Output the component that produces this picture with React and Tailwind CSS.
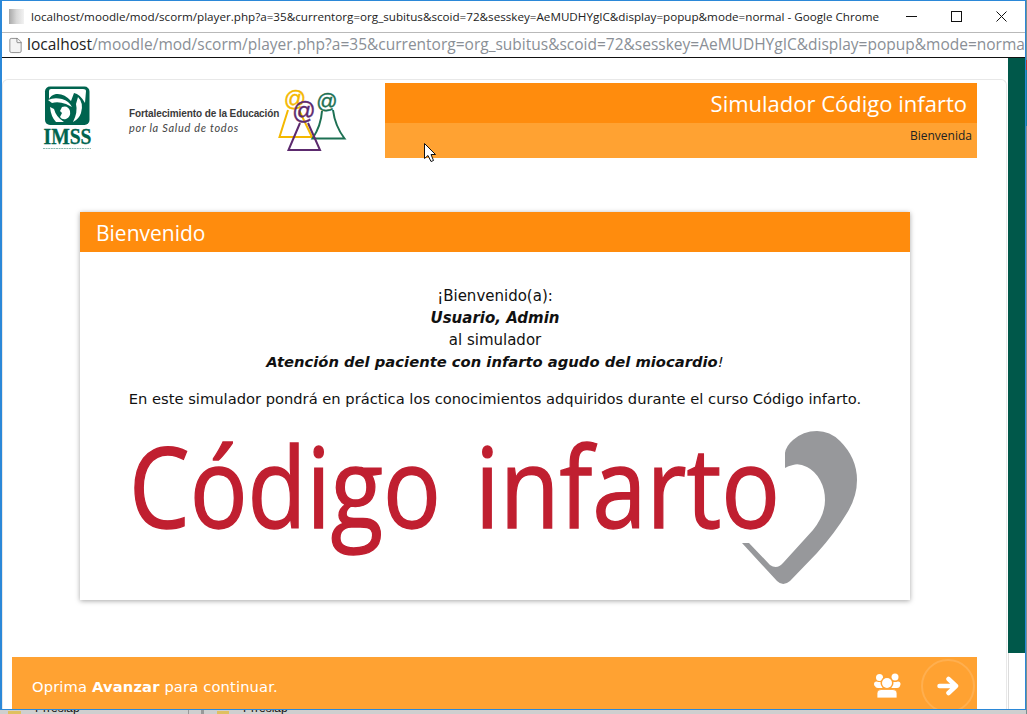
import { File } from 'lucide-react';

const URL_PATH = '/moodle/mod/scorm/player.php?a=35&currentorg=org_subitus&scoid=72&sesskey=AeMUDHYgIC&display=popup&mode=normal';

function WindowButtons() {
  return (
    <div className="ml-auto flex pr-px">
      <div className="flex h-[31px] w-[45px] items-center justify-center">
        <svg width="11" height="11" viewBox="0 0 11 11"><path d="M0 5.5H11" stroke="#111" /></svg>
      </div>
      <div className="flex h-[31px] w-[45px] items-center justify-center">
        <svg width="11" height="11" viewBox="0 0 11 11"><rect x="0.5" y="0.5" width="10" height="10" fill="none" stroke="#111" /></svg>
      </div>
      <div className="flex h-[31px] w-[45px] items-center justify-center">
        <svg width="11" height="11" viewBox="0 0 11 11"><path d="M0.5 0.5L10.5 10.5M10.5 0.5L0.5 10.5" stroke="#111" /></svg>
      </div>
    </div>
  );
}

// viewBox uses page coordinates, easier to compare against the screenshot
function ImssLogo() {
  return (
    <svg width="55" height="70" viewBox="40 86 55 70" className="shrink-0">
      <rect x="45" y="89.5" width="44.5" height="38.5" rx="5" fill="#00644f" />
      <path d="M49 94Q49 92 51 92H83Q86 92 86 94L85 106Q80 97 74 96L71 104Q64 96 56 97Q51 98 49 102Z" fill="#fff" />
      <path d="M48 103Q54 100 62 102Q69 104 72 110L66 107Q58 104 52 106Z" fill="#fff" />
      <path d="M78 100Q84 106 81 116Q79 122 73 125Q78 115 76 107Z" fill="#fff" />
      <path d="M62 110Q68 108 70 114Q71 120 66 122Q62 123 60 120L62 116L60 114Z" fill="#fff" />
      <path d="M54 112Q56 120 64 125H56Q51 120 50 110Z" fill="#fff" />
      <text x="43.5" y="147" fontFamily="'Liberation Serif', serif" fontWeight="700" fontSize="23" fill="#00644f" stroke="#00644f" strokeWidth="0.3" textLength="48" lengthAdjust="spacingAndGlyphs">IMSS</text>
      <path d="M43 151.5H91" stroke="#00644f" strokeWidth="1" strokeDasharray="2 0.6" opacity="0.45" />
    </svg>
  );
}

function AtPeople() {
  return (
    <svg width="72" height="75" viewBox="276 83 72 75" className="shrink-0">
      <g fill="none" strokeWidth="2">
        <path d="M288 110L279.500 137H312L299 110" stroke="#f4b800" />
        <path d="M322 111Q321 126 312.500 138.500H344.500Q335 126 333 110" stroke="#1d7053" />
        <path d="M300 123L288.500 150H320L308 123" stroke="#5c2a6e" />
      </g>
      <g fontFamily="'Liberation Sans', sans-serif" textAnchor="middle" strokeWidth="0.4">
        <text x="295" y="105.500" fontSize="22" fill="#f4b800" stroke="#f4b800">@</text>
        <text x="327" y="107.500" fontSize="21" fill="#1d7053" stroke="#1d7053">@</text>
        <text x="304" y="119" fontSize="23" fill="#5c2a6e" stroke="#5c2a6e">@</text>
      </g>
    </svg>
  );
}

function CodigoInfartoLogo() {
  return (
    <svg width="740" height="165" viewBox="125 425 740 165" className="shrink-0">
      <g fontFamily="'Open Sans', sans-serif" fontSize="111" fill="#c01f30" stroke="#c01f30" strokeWidth="1.4">
        <text x="129" y="528" textLength="312" lengthAdjust="spacingAndGlyphs">Código</text>
        <text x="475" y="528" textLength="305" lengthAdjust="spacingAndGlyphs">infarto</text>
      </g>
      <path
        d="M785 468L785 453Q786 446 793 440Q803 431 817 431Q830 431 840 441Q857 458 857 480Q857 497 847 513Q835 533 817 553L790 581Q783 587 777 581L742 543H749L770 565Q777 570 783 563L813 530Q825 515 825 500Q825 489 820 480Q815 471 807 467Q799 463 793 465Q788 466 785 468Z"
        fill="#97989b"
      />
    </svg>
  );
}

function UsersIcon() {
  return (
    <svg width="27" height="26" viewBox="875 673 27 26" className="ml-auto mt-[16px] shrink-0" fill="#fff">
      <circle cx="880.500" cy="677.500" r="3.500" />
      <circle cx="896" cy="677" r="3.500" />
      <circle cx="877.500" cy="684" r="2.500" />
      <circle cx="899" cy="684" r="2.500" />
      <rect x="876" y="682" width="25" height="6" rx="3" />
      <circle cx="888" cy="683" r="6.500" fill="#ffa232" />
      <circle cx="888" cy="683" r="5" />
      <path d="M878 698V693Q878 689.500 882 689.500H894Q898 689.500 898 693V698Z" stroke="#ffa232" strokeWidth="0.8" />
    </svg>
  );
}

function Cursor() {
  return (
    <svg width="14" height="21" viewBox="0 0 14 21" className="absolute left-[423px] top-[142px]">
      <path d="M1.500 1.500V16.500L5 13.500L8 19.500L10.500 18.500L8 12.500H12.500Z" fill="#fff" stroke="#111" strokeWidth="1" />
    </svg>
  );
}

export default function App() {
  return (
    <div className="relative flex h-[714px] w-[1027px] overflow-hidden bg-[#cfcfcf] font-['Open_Sans',sans-serif]">
      <div className="flex w-[1026px] flex-col">
        <div className="flex h-[710px] flex-col border-x border-t border-b border-x-[#2b88d8] border-y-[#2b88d8] border-l-2">
          {/* title bar */}
          <div className="flex h-[31px] shrink-0 items-center bg-white">
            <div className="ml-[7px] h-[15px] w-[15px] bg-gradient-to-r from-[#a8a8a8] via-[#d8d8d8] to-[#f2f2f2]" />
            <span className="ml-[7px] whitespace-nowrap text-[11.67px] text-[#222]">
              localhost{URL_PATH} - Google Chrome
            </span>
            <WindowButtons />
          </div>

          {/* address bar */}
          <div className="flex h-[26px] shrink-0 items-center overflow-hidden border-t border-b border-t-[#b9b9b9] border-b-[#111] bg-white">
            <File size={17} strokeWidth={1} className="ml-[5px] shrink-0 fill-[#f3f3f3] text-[#666]" />
            <span className="ml-[3px] whitespace-nowrap text-[15.500px] text-[#8a8f96]">
              <span className="text-[#222]">localhost</span>
              {URL_PATH}
            </span>
          </div>

          <div className="flex min-h-0 flex-1">
            <main className="min-w-0 flex-1 bg-white pr-px pt-[21px]">
              <div className="flex h-full flex-col rounded-t-md border-x border-t border-[#e8e8e8] pl-[9px] pr-[29px] pt-[3px]">
                <header className="flex h-[75px] shrink-0">
                  <div className="ml-[28px] flex">
                    <ImssLogo />
                    <div className="ml-[34px] w-[147px] shrink-0 pt-[25px]">
                      <div className="whitespace-nowrap font-['Liberation_Sans',sans-serif] text-[10px] font-bold leading-[12px] tracking-[-0.1px] text-[#3a3a3a]">
                        Fortalecimiento de la Educación
                      </div>
                      <div className="mt-[2px] whitespace-nowrap font-['Lato',sans-serif] text-[11px] italic leading-[12px] tracking-[0.7px] text-[#444]">
                        por la Salud de todos
                      </div>
                    </div>
                    <AtPeople />
                  </div>
                  <div className="ml-auto flex w-[592px] shrink-0 flex-col">
                    <div className="flex h-[40px] items-center justify-end bg-[#ff8c0d] pr-[10px] text-[22px] text-white">
                      Simulador Código infarto
                    </div>
                    <div className="h-[35px] bg-[#ffa232] pr-[5px] pt-[5px] text-right text-[12px] leading-[16px] text-[#222]">
                      Bienvenida
                    </div>
                  </div>
                </header>

                <section className="ml-[68px] mt-[54px] h-[388px] w-[830px] shrink-0 bg-white shadow-[0_1px_5px_rgba(0,0,0,0.35)]">
                  <h1 className="flex h-[40px] items-center bg-[#ff8c0d] pl-[16px] pt-[3px] text-[21px] text-white">Bienvenido</h1>
                  <div className="flex flex-col items-center pt-[33px] font-['DejaVu_Sans',sans-serif] text-[15px] leading-[22px] text-[#111]">
                    <div>¡Bienvenido(a):</div>
                    <div className="font-bold italic">Usuario, Admin</div>
                    <div>al simulador</div>
                    <div className="text-[14.75px] italic">
                      <span className="font-bold">Atención del paciente con infarto agudo del miocardio</span>!
                    </div>
                    <div className="mt-[15px] whitespace-nowrap text-[14.7px]">
                      En este simulador pondrá en práctica los conocimientos adquiridos durante el curso Código infarto.
                    </div>
                    <div className="mt-[15px]">
                      <CodigoInfartoLogo />
                    </div>
                  </div>
                </section>

                <footer className="mt-[57px] flex h-[52px] shrink-0 overflow-hidden bg-[#ffa232] pl-[20px] font-['DejaVu_Sans',sans-serif] text-white">
                  <p className="mt-[21px] text-[14.7px] leading-[17px] tracking-[0.15px]">
                    Oprima <b>Avanzar</b> para continuar.
                  </p>
                  <UsersIcon />
                  <div className="ml-[20px] mr-[2px] mt-[2px] flex h-[54px] w-[54px] shrink-0 items-center justify-center rounded-full border-2 border-[#ffaf4f]">
                    <svg width="22" height="20" viewBox="0 0 22 20" fill="none" stroke="#fff" strokeWidth="4.500" strokeLinecap="round" strokeLinejoin="round">
                      <path d="M2.500 10H18M11.500 3L19 10L11.500 17" />
                    </svg>
                  </div>
                </footer>
              </div>
            </main>

            {/* page scrollbar side */}
            <aside className="flex w-[17px] shrink-0 flex-col bg-white">
              <div className="h-[595px] bg-[#00584a]" />
              <div className="flex-1 border-l border-l-[#dcdcdc]" />
            </aside>
          </div>
        </div>

        {/* desktop behind the popup */}
        <div className="flex h-[4px] overflow-hidden text-[12px] leading-[14px] text-[#111]">
          <div className="ml-[8px] mt-[1px] h-[3px] w-[13px] bg-[#e0c060]" />
          <span className="-mt-[9px] ml-[14px] w-[40px] font-['Liberation_Sans',sans-serif]">Prreslap</span>
          <div className="ml-[113px] h-[4px] w-px bg-[#999]" />
          <div className="ml-[12px] h-[4px] w-[3px] bg-[#999]" />
          <div className="ml-[13px] mt-[1px] h-[3px] w-[12px] bg-[#e0c060]" />
          <span className="-mt-[9px] ml-[14px] font-['Liberation_Sans',sans-serif]">Prreslap</span>
        </div>
      </div>

      {/* sliver of the window behind */}
      <div className="flex w-px flex-col bg-[#7a8f8f]">
        <div className="mt-[60px] h-[10px] bg-[#c0392b]" />
        <div className="h-[56px] bg-[#1a7f9c]" />
      </div>

      <Cursor />
    </div>
  );
}
